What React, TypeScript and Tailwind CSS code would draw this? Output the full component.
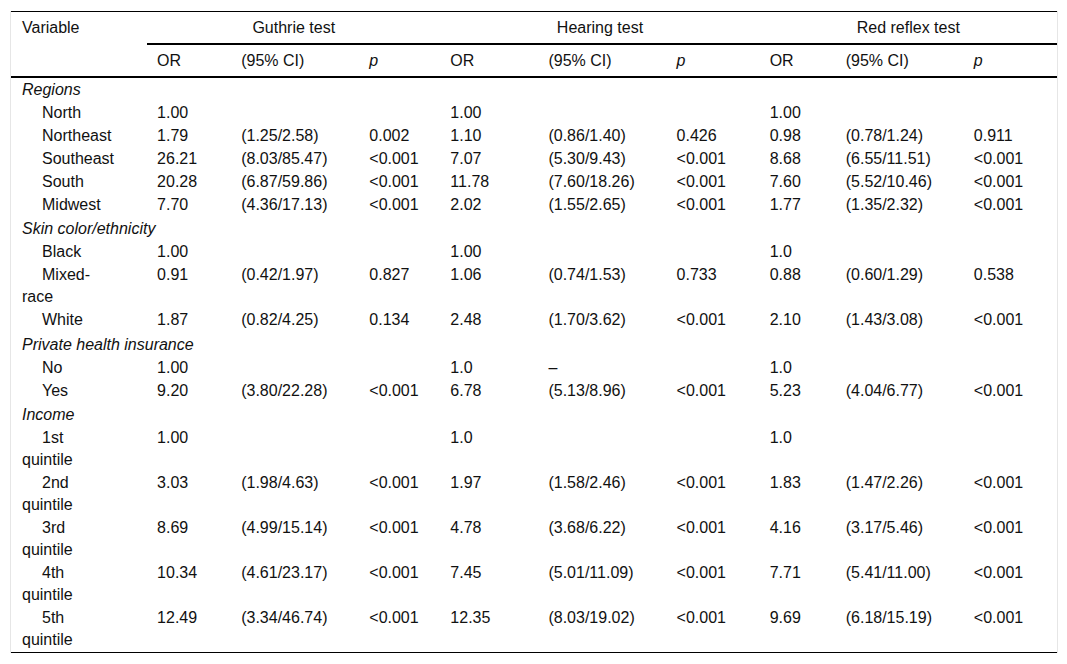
import React from "react";

type Row =
  | { kind: "cat"; label: string }
  | { kind: "item"; label: string; label2?: string; v: string[] };

const rows: Row[] = [
  { kind: "cat", label: "Regions" },
  { kind: "item", label: "North", v: ["1.00", "", "", "1.00", "", "", "1.00", "", ""] },
  { kind: "item", label: "Northeast", v: ["1.79", "(1.25/2.58)", "0.002", "1.10", "(0.86/1.40)", "0.426", "0.98", "(0.78/1.24)", "0.911"] },
  { kind: "item", label: "Southeast", v: ["26.21", "(8.03/85.47)", "<0.001", "7.07", "(5.30/9.43)", "<0.001", "8.68", "(6.55/11.51)", "<0.001"] },
  { kind: "item", label: "South", v: ["20.28", "(6.87/59.86)", "<0.001", "11.78", "(7.60/18.26)", "<0.001", "7.60", "(5.52/10.46)", "<0.001"] },
  { kind: "item", label: "Midwest", v: ["7.70", "(4.36/17.13)", "<0.001", "2.02", "(1.55/2.65)", "<0.001", "1.77", "(1.35/2.32)", "<0.001"] },
  { kind: "cat", label: "Skin color/ethnicity" },
  { kind: "item", label: "Black", v: ["1.00", "", "", "1.00", "", "", "1.0", "", ""] },
  { kind: "item", label: "Mixed-", label2: "race", v: ["0.91", "(0.42/1.97)", "0.827", "1.06", "(0.74/1.53)", "0.733", "0.88", "(0.60/1.29)", "0.538"] },
  { kind: "item", label: "White", v: ["1.87", "(0.82/4.25)", "0.134", "2.48", "(1.70/3.62)", "<0.001", "2.10", "(1.43/3.08)", "<0.001"] },
  { kind: "cat", label: "Private health insurance" },
  { kind: "item", label: "No", v: ["1.00", "", "", "1.0", "–", "", "1.0", "", ""] },
  { kind: "item", label: "Yes", v: ["9.20", "(3.80/22.28)", "<0.001", "6.78", "(5.13/8.96)", "<0.001", "5.23", "(4.04/6.77)", "<0.001"] },
  { kind: "cat", label: "Income" },
  { kind: "item", label: "1st", label2: "quintile", v: ["1.00", "", "", "1.0", "", "", "1.0", "", ""] },
  { kind: "item", label: "2nd", label2: "quintile", v: ["3.03", "(1.98/4.63)", "<0.001", "1.97", "(1.58/2.46)", "<0.001", "1.83", "(1.47/2.26)", "<0.001"] },
  { kind: "item", label: "3rd", label2: "quintile", v: ["8.69", "(4.99/15.14)", "<0.001", "4.78", "(3.68/6.22)", "<0.001", "4.16", "(3.17/5.46)", "<0.001"] },
  { kind: "item", label: "4th", label2: "quintile", v: ["10.34", "(4.61/23.17)", "<0.001", "7.45", "(5.01/11.09)", "<0.001", "7.71", "(5.41/11.00)", "<0.001"] },
  { kind: "item", label: "5th", label2: "quintile", v: ["12.49", "(3.34/46.74)", "<0.001", "12.35", "(8.03/19.02)", "<0.001", "9.69", "(6.18/15.19)", "<0.001"] },
];

const widths = ["w-[136px]", "w-[84px]", "w-[128px]", "w-[81px]", "w-[98px]", "w-[128px]", "w-[93px]", "w-[76px]", "w-[128px]", "w-[93px]"];

export default function App() {
  return (
    <div className="min-h-screen bg-white pl-[10px] pt-[11px] font-['Liberation_Sans',Arial,sans-serif] text-[16px] text-[#111]">
      <div className="w-[1048px] border-x border-[#e6e6e6]">
        <table className="w-full table-fixed border-collapse">
          <colgroup>
            {widths.map((w, i) => (
              <col key={i} className={w} />
            ))}
          </colgroup>
          <thead>
            <tr className="border-t border-black">
              <th rowSpan={2} className="px-[11px] pt-[5px] text-left align-top font-normal leading-[22px]">
                Variable
              </th>
              <th colSpan={3} className="border-b-2 border-black pt-[5px] pb-[4px] text-center font-normal leading-[22px]">
                Guthrie test
              </th>
              <th colSpan={3} className="border-b-2 border-black pt-[5px] pb-[4px] text-center font-normal leading-[22px]">
                Hearing test
              </th>
              <th colSpan={3} className="border-b-2 border-black pt-[5px] pb-[4px] text-center font-normal leading-[22px]">
                Red reflex test
              </th>
            </tr>
            <tr className="border-b-2 border-black">
              {["OR", "(95% CI)", "p", "OR", "(95% CI)", "p", "OR", "(95% CI)", "p"].map((h, i) => (
                <th key={i} className={`px-[10px] pt-[5px] pb-[4px] text-left font-normal leading-[22px] ${h === "p" ? "italic" : ""}`}>
                  {h}
                </th>
              ))}
            </tr>
          </thead>
          <tbody className="border-b border-black">
            {rows.map((r, i) =>
              r.kind === "cat" ? (
                <tr key={i}>
                  <td
                    colSpan={10}
                    className={`px-[11px] pb-[0.5px] italic leading-[22px] ${i === 0 ? "pt-[0.5px]" : "pt-[2px]"}`}
                  >
                    {r.label}
                  </td>
                </tr>
              ) : (
                <tr key={i} className="align-top">
                  <td className="px-[11px] py-[0.5px] leading-[22px]">
                    <span className="pl-5">{r.label}</span>
                    {r.label2 && (
                      <>
                        <br />
                        {r.label2}
                      </>
                    )}
                  </td>
                  {r.v.map((v, j) => (
                    <td key={j} className="px-[10px] py-[0.5px] leading-[22px]">
                      {v}
                    </td>
                  ))}
                </tr>
              )
            )}
            <tr>
              <td colSpan={10} className="h-[1px] p-0" />
            </tr>
          </tbody>
        </table>
      </div>
    </div>
  );
}
